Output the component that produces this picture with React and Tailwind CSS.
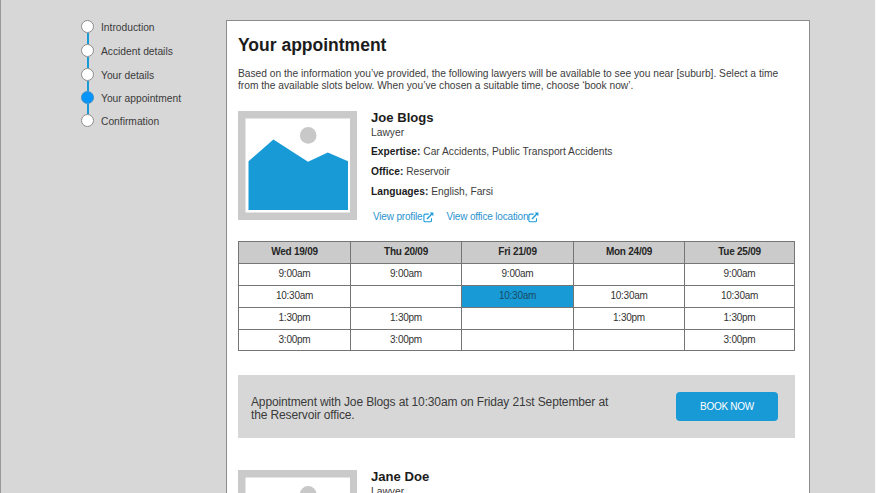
const steps = [
  { label: "Introduction", height: "h-6" },
  { label: "Accident details", height: "h-6" },
  { label: "Your details", height: "h-[23px]" },
  { label: "Your appointment", height: "h-[23px]", active: true },
  { label: "Confirmation", height: "h-[14px]", last: true },
];

const days = ["Wed 19/09", "Thu 20/09", "Fri 21/09", "Mon 24/09", "Tue 25/09"];

const slots = [
  ["9:00am", "9:00am", "9:00am", "", "9:00am"],
  ["10:30am", "", "10:30am", "10:30am", "10:30am"],
  ["1:30pm", "1:30pm", "", "1:30pm", "1:30pm"],
  ["3:00pm", "3:00pm", "", "", "3:00pm"],
];

function Steps() {
  return (
    <nav className="mt-5 ml-[80px] w-[145px] shrink-0">
      {steps.map((s) => (
        <div key={s.label} className={`flex gap-[7px] ${s.height}`}>
          <div className="flex w-[13px] flex-col items-center">
            <span
              className={`size-[13px] shrink-0 rounded-full border ${s.active ? "border-[#3f8fc4] bg-[#0795fb]" : "border-[#8c8c8c] bg-white"}`}
            />
            {!s.last && <span className="w-[2px] flex-1 bg-[#189ad6]" />}
          </div>
          <span className="text-[10.25px] leading-[15px] whitespace-nowrap text-[#3a3a3a]">{s.label}</span>
        </div>
      ))}
    </nav>
  );
}

function Portrait() {
  return (
    <svg width="119" height="109" viewBox="0 0 119 109" className="shrink-0">
      <rect width="119" height="109" fill="#cacaca" />
      <rect x="7.5" y="7.5" width="104.5" height="94" fill="#fff" />
      <circle cx="70.2" cy="24.4" r="8.3" fill="#c8c8c8" />
      <path d="M10.5 50.3 35.4 28.4 70 50.8 89.8 41.6 110 50.3V99H10.5Z" fill="#189ad6" />
    </svg>
  );
}

function ExternalIcon() {
  return (
    <svg width="11" height="11" viewBox="0 0 11 11" fill="none" stroke="#1e9bd8" className="shrink-0">
      <path d="M5.8 2.1H2.2Q.9 2.1.9 3.4V8.4Q.9 9.7 2.2 9.7H7.2Q8.5 9.7 8.5 8.4V6.2" strokeWidth="1.1" />
      <path d="M4 6.9 8.8 2.1" strokeWidth="1.4" />
      <path d="M6.6.4H10.4V4.3Z" fill="#1e9bd8" stroke="none" />
    </svg>
  );
}

function Lawyer({ name, expertise, office, languages }) {
  const facts = [
    ["Expertise:", expertise],
    ["Office:", office],
    ["Languages:", languages],
  ];
  return (
    <section className="flex h-[109px] gap-[14px]">
      <Portrait />
      <div className="-mt-px whitespace-nowrap text-[#3c3c3c]">
        <h2 className="text-[13.1px] leading-[15px] font-bold text-[#1c1c1c]">{name}</h2>
        <p className="pt-px text-[10.25px] leading-[14px]">Lawyer</p>
        <div className="pt-[2px]">
          {facts.map(([k, v]) => (
            <p key={k} className="text-[10.22px] leading-5">
              <b className="text-[#1c1c1c]">{k}</b> {v}
            </p>
          ))}
        </div>
        <div className="mt-[8px] ml-[2px] flex text-[10px] leading-[14px] tracking-[-0.17px] text-[#2a93cf]">
          <a className="flex w-[73.5px] items-center gap-px">View profile <ExternalIcon /></a>
          <a className="flex items-center">View office location <ExternalIcon /></a>
        </div>
      </div>
    </section>
  );
}

function Timetable() {
  return (
    <div className="mt-[21px] grid h-[110px] grid-cols-[112px_111px_112px_111px_110px] grid-rows-[22px_22px_22px_22px_21px] border-t border-l border-[#757575] text-center text-[10px] leading-[20px] tracking-[-0.24px] text-[#333]">
      {days.map((d) => (
        <div key={d} className="border-r border-b border-[#757575] bg-[#cbcbcb] font-bold text-[#262626]">{d}</div>
      ))}
      {slots.flatMap((row, r) =>
        row.map((t, c) => (
          <div
            key={`${r}-${c}`}
            className={`border-r border-b border-[#757575] ${r === 1 && c === 2 ? "bg-[#189ad6] text-[#174a63]" : ""}`}
          >
            {t}
          </div>
        )),
      )}
    </div>
  );
}

export default function App() {
  return (
    <div className="flex h-[493px] w-[876px] overflow-hidden border-r border-l border-r-[#fafafa] border-l-[#999] bg-[#d7d7d7] font-['Liberation_Sans',Arial,sans-serif]">
      <Steps />
      <main className="mt-5 h-[600px] w-[584px] shrink-0 border border-[#8c8c8c] bg-white pt-[14px] pl-[11px]">
        <div className="w-[557px]">
          <h1 className="text-[17.5px] leading-5 font-bold text-[#1c1c1c]">Your appointment</h1>
          <p className="mt-[13px] mb-[19px] text-[10.22px] leading-3 whitespace-nowrap text-[#3c3c3c]">
            Based on the information you’ve provided, the following lawyers will be available to see you near [suburb]. Select a time
            <br />
            from the available slots below. When you’ve chosen a suitable time, choose ‘book now’.
          </p>
          <Lawyer name="Joe Blogs" expertise="Car Accidents, Public Transport Accidents" office="Reservoir" languages="English, Farsi" />
          <Timetable />
          <div className="mt-6 mb-8 flex h-[63px] items-center justify-between bg-[#d7d7d7] pr-[17px] pl-[13px]">
            <p className="mt-[5px] text-[12px] leading-[13px] tracking-[-0.14px] whitespace-nowrap text-[#3a3a3a]">
              Appointment with Joe Blogs at 10:30am on Friday 21st September at
              <br />
              the Reservoir office.
            </p>
            <button className="h-[29px] w-[102px] rounded-[4px] bg-[#189ad6] text-[10px] tracking-[-0.28px] text-white">BOOK NOW</button>
          </div>
          <Lawyer name="Jane Doe" expertise="Car Accidents" office="Reservoir" languages="English" />
        </div>
      </main>
    </div>
  );
}
